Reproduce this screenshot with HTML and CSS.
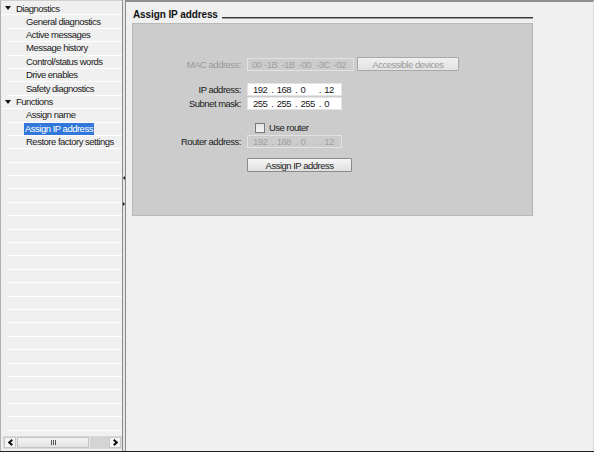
FILE: index.html
```html
<!DOCTYPE html>
<html>
<head>
<meta charset="utf-8">
<link rel="stylesheet" href="styles.css">
</head>
<body>
<div class="app">
  <div class="nav">
    <ul class="tree">
      <li class="row grp"><span class="tri"></span>Diagnostics</li>
      <li class="row item"><span class="lbl">General diagnostics</span></li>
      <li class="row item"><span class="lbl">Active messages</span></li>
      <li class="row item"><span class="lbl">Message history</span></li>
      <li class="row item"><span class="lbl">Control/status words</span></li>
      <li class="row item"><span class="lbl">Drive enables</span></li>
      <li class="row item"><span class="lbl">Safety diagnostics</span></li>
      <li class="row grp"><span class="tri"></span>Functions</li>
      <li class="row item"><span class="lbl">Assign name</span></li>
      <li class="row item"><span class="lbl sel">Assign IP address</span></li>
      <li class="row item"><span class="lbl">Restore factory settings</span></li>
      <li class="row"></li><li class="row"></li><li class="row"></li><li class="row"></li>
      <li class="row"></li><li class="row"></li><li class="row"></li><li class="row"></li>
      <li class="row"></li><li class="row"></li><li class="row"></li><li class="row"></li>
      <li class="row"></li><li class="row"></li><li class="row"></li><li class="row"></li>
      <li class="row"></li><li class="row"></li><li class="row"></li><li class="row"></li>
      <li class="row"></li><li class="row"></li><li class="row"></li>
    </ul>
    <div class="hscroll">
      <span class="sbtn"><span class="chev left"></span></span>
      <span class="thumb"><span class="grip"></span></span>
      <span class="track"></span>
      <span class="sbtn"><span class="chev right"></span></span>
    </div>
  </div>
  <div class="split">
    <span class="sarr sl"></span>
    <span class="sarr sr"></span>
  </div>
  <div class="main">
    <div class="title">
      <h1>Assign IP address</h1>
      <span class="rule"></span>
    </div>
    <div class="box">
      <div class="frow r-mac">
        <span class="flabel dis">MAC address:</span>
        <div class="fctl">
          <div class="field mac dis">
            <span class="m0">00</span><span class="mseg">-1B</span><span class="mseg">-1B</span><span class="mseg">-00</span><span class="mseg">-3C</span><span class="mseg">-02</span>
          </div>
          <button class="btn dis acc">Accessible devices</button>
        </div>
      </div>
      <div class="frow r-ip">
        <span class="flabel">IP address:</span>
        <div class="field ip">
          <span class="seg">192</span><span class="dot">.</span><span class="seg">168</span><span class="dot">.</span><span class="seg">0</span><span class="dot">.</span><span class="seg">12</span>
        </div>
      </div>
      <div class="frow r-sub">
        <span class="flabel">Subnet mask:</span>
        <div class="field ip">
          <span class="seg">255</span><span class="dot">.</span><span class="seg">255</span><span class="dot">.</span><span class="seg">255</span><span class="dot">.</span><span class="seg">0</span>
        </div>
      </div>
      <div class="frow r-chk">
        <span class="flabel"></span>
        <label class="chk"><span class="cbox"></span>Use router</label>
      </div>
      <div class="frow r-rt">
        <span class="flabel">Router address:</span>
        <div class="field ip dis">
          <span class="seg">192</span><span class="dot">.</span><span class="seg">168</span><span class="dot">.</span><span class="seg">0</span><span class="dot">.</span><span class="seg">12</span>
        </div>
      </div>
      <div class="frow r-btn">
        <span class="flabel"></span>
        <button class="btn assign">Assign IP address</button>
      </div>
    </div>
  </div>
</div>
</body>
</html>
```
FILE: styles.css
```css
* { box-sizing: border-box; }
html, body { margin: 0; padding: 0; }
body {
  width: 594px;
  height: 452px;
  overflow: hidden;
  background: #f0f0f0;
  font-family: "Liberation Sans", Arial, sans-serif;
  font-size: 9.5px;
  letter-spacing: -0.5px;
  color: #1a1a1a;
}
.app {
  display: flex;
  height: 452px;
  border-bottom: 1px solid #202020;
}
.nav {
  width: 122px;
  display: flex;
  flex-direction: column;
  border-left: 1px solid #b0b0b0;
  border-top: 1px solid #d0d0d0;
  background: #f0f0f0;
  padding-left: 1px;
}
.tree {
  list-style: none;
  margin: 0;
  padding: 1px 0 0 0;
  flex: 1;
  overflow: hidden;
}
.row {
  height: 13.4px;
  display: flex;
  align-items: center;
  border-bottom: 1px solid #ffffff;
  margin-left: 5px;
  white-space: nowrap;
}
.row.grp { margin-left: 0; padding-left: 3px; }
.tri {
  width: 0; height: 0;
  border-left: 3px solid transparent;
  border-right: 3px solid transparent;
  border-top: 4px solid #111;
  margin-right: 5px;
}
.row.item { padding-left: 18px; }
.lbl { padding: 1px 1px; line-height: 10px; }
.lbl.sel { background: #3278da; color: #fff; margin-left: -1px; }

.hscroll {
  height: 13px;
  margin: 3px 0 2px 1px;
  display: flex;
  border: 1px solid #dadada;
  background: #e8e8e8;
}
.sbtn {
  width: 12px;
  display: flex;
  align-items: center;
  justify-content: center;
  background: #f6f6f6;
  border: 1px solid #c8c8c8;
}
.chev {
  width: 5px; height: 5px;
  border-left: 2px solid #111;
  border-bottom: 2px solid #111;
}
.chev.left { transform: rotate(45deg); margin-left: 2px; }
.chev.right { transform: rotate(-135deg); margin-right: 2px; }
.thumb {
  width: 72px;
  margin: 0 1px;
  background: linear-gradient(#f4f4f4, #e2e2e2);
  border: 1px solid #c4c4c4;
  display: flex;
  align-items: center;
  justify-content: center;
}
.grip {
  width: 5px; height: 5px;
  border-left: 1px solid #555;
  border-right: 1px solid #555;
}
.grip::after {
  content: "";
  display: block;
  margin-left: 1px;
  width: 1px; height: 5px;
  background: #555;
}
.track { flex: 1; background: #d4d4d4; }

.split {
  width: 4px;
  border-left: 1px solid #8c8c8c;
  border-right: 1px solid #8c8c8c;
  background: #e6e6e6;
  display: flex;
  flex-direction: column;
  align-items: center;
  padding-top: 176px;
}
.sarr { width: 0; height: 0; border-top: 2px solid transparent; border-bottom: 2px solid transparent; }
.sl { border-right: 2px solid #111; }
.sr { border-left: 2px solid #111; margin-top: 22px; }

.main {
  flex: 1;
  border-top: 2px solid #8e8e8e;
  border-right: 1px solid #dcdcdc;
  padding-left: 6px;
}
.title {
  display: flex;
  align-items: flex-end;
  height: 19px;
  width: 401px;
}
.title h1 {
  margin: 0 0 0 1px;
  font-size: 10px;
  font-weight: bold;
  letter-spacing: -0.1px;
  line-height: 12px;
  color: #111;
}
.rule {
  flex: 1;
  height: 2px;
  margin: 0 0 2px 4px;
  background: #3a3a3a;
  border-bottom: 1px solid #9a9a9a;
}
.box {
  margin-top: 2px;
  width: 401px;
  height: 193px;
  background: #cccccc;
  border: 1px solid #bababa;
  border-right-color: #b0b0b0;
  padding-top: 33px;
}
.frow {
  display: grid;
  grid-template-columns: 108px auto;
  column-gap: 6px;
  align-items: center;
}
.flabel { text-align: right; white-space: nowrap; }
.flabel.dis, .dis { color: #999; }
.fctl { display: flex; align-items: center; gap: 3px; }
.field {
  height: 13px;
  display: flex;
  align-items: center;
  background: #fff;
  border: 1px solid #e4e4e4;
  white-space: nowrap;
}
.field.dis { background: #cccccc; border-color: #e2e2e2; color: #a0a0a0; }
.field.mac { width: 107px; padding-left: 4px; }
.m0 { width: 12px; }
.mseg { width: 17.4px; }
.field.ip { width: 95px; padding-left: 5px; }
.seg { width: 17px; }
.dot { width: 7px; text-align: center; margin-left: -1px; margin-right: 1px; }
.btn {
  font: inherit;
  letter-spacing: inherit;
  height: 14px;
  padding: 0;
  border: 1px solid #8a8a8a;
  background: linear-gradient(#f6f6f6, #e0e0e0);
  color: #1a1a1a;
  border-radius: 1px;
  line-height: 11px;
}
.btn.acc { width: 102px; border-color: #a8a8a8; color: #999; background: linear-gradient(#f0f0f0, #e2e2e2); }
.btn.assign { width: 105px; }
.r-ip { margin-top: 12px; }
.r-sub { margin-top: 1px; }
.r-chk { margin-top: 11px; }
.r-rt { margin-top: 1px; }
.r-btn { margin-top: 10px; }
.chk { display: flex; align-items: center; height: 13px; padding-left: 8px; }
.cbox {
  width: 10px; height: 10px;
  border: 1px solid #7a7a7a;
  background: linear-gradient(#e4e4e4, #f4f4f4);
  margin-right: 4px;
}
```
